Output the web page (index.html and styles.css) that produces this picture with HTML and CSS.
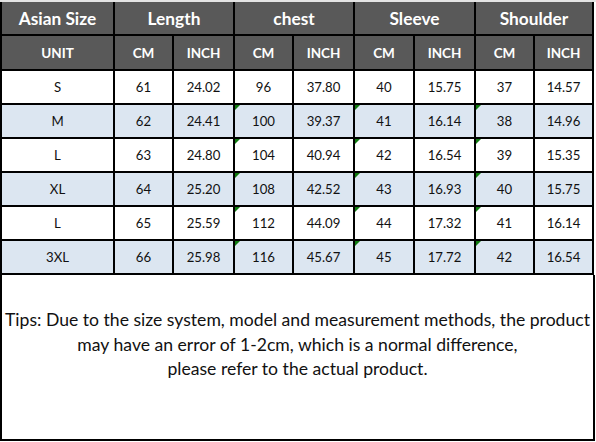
FILE: index.html
```html
<!DOCTYPE html>
<html>
<head>
<meta charset="utf-8">
<link rel="stylesheet" href="styles.css">
</head>
<body>
<div class="strip"></div>
<div class="chart">
  <div class="hd">Asian Size</div>
  <div class="hd span2">Length</div>
  <div class="hd span2">chest</div>
  <div class="hd span2">Sleeve</div>
  <div class="hd span2">Shoulder</div>

  <div class="sub">UNIT</div>
  <div class="sub">CM</div><div class="sub">INCH</div>
  <div class="sub">CM</div><div class="sub">INCH</div>
  <div class="sub">CM</div><div class="sub">INCH</div>
  <div class="sub">CM</div><div class="sub">INCH</div>

  <div class="c">S</div><div class="c">61</div><div class="c">24.02</div><div class="c">96</div><div class="c">37.80</div><div class="c">40</div><div class="c">15.75</div><div class="c">37</div><div class="c">14.57</div>

  <div class="c b">M</div><div class="c b">62</div><div class="c b">24.41</div><div class="c b mark">100</div><div class="c b">39.37</div><div class="c b mark">41</div><div class="c b">16.14</div><div class="c b mark">38</div><div class="c b">14.96</div>

  <div class="c">L</div><div class="c">63</div><div class="c">24.80</div><div class="c mark">104</div><div class="c">40.94</div><div class="c mark">42</div><div class="c">16.54</div><div class="c mark">39</div><div class="c">15.35</div>

  <div class="c b">XL</div><div class="c b">64</div><div class="c b">25.20</div><div class="c b mark">108</div><div class="c b">42.52</div><div class="c b mark">43</div><div class="c b">16.93</div><div class="c b mark">40</div><div class="c b">15.75</div>

  <div class="c">L</div><div class="c">65</div><div class="c">25.59</div><div class="c mark">112</div><div class="c">44.09</div><div class="c mark">44</div><div class="c">17.32</div><div class="c mark">41</div><div class="c">16.14</div>

  <div class="c b">3XL</div><div class="c b">66</div><div class="c b">25.98</div><div class="c b mark">116</div><div class="c b">45.67</div><div class="c b mark">45</div><div class="c b">17.72</div><div class="c b mark">42</div><div class="c b">16.54</div>
</div>
<div class="tips">
  <p>Tips: Due to the size system, model and measurement methods, the product<br>may have an error of 1-2cm, which is a normal difference,<br>please refer to the actual product.</p>
</div>
</body>
</html>
```

FILE: styles.css
```css
html, body {
  margin: 0;
  padding: 0;
  background: #ffffff;
}
body {
  width: 596px;
  height: 442px;
  overflow: hidden;
  font-family: Lato, "Open Sans", sans-serif;
}
.strip {
  height: 2px;
  width: 596px;
  background: #e4e4e4;
}
.chart {
  display: grid;
  grid-template-columns: 111px 57px 59px 57px 59px 58px 59px 57px 57px;
  grid-template-rows: 32px 33px repeat(6, 32px);
  gap: 2px;
  padding: 0 2px 2px 2px;
  background: #000;
  width: max-content;
}
.hd, .sub, .c {
  display: flex;
  align-items: center;
  justify-content: center;
}
.hd {
  background: #595959;
  color: #ffffff;
  font-weight: 700;
  font-size: 17.3px;
}
.span2 {
  grid-column: span 2;
}
.sub {
  background: #595959;
  color: #ffffff;
  font-weight: 700;
  font-size: 13.5px;
}
.c {
  background: #ffffff;
  color: #111;
  font-size: 13.2px;
}
.c.b {
  background: #dce6f1;
}
.mark {
  position: relative;
}
.mark::before {
  content: "";
  position: absolute;
  left: 0;
  top: 0;
  border-top: 5px solid #0f7b0f;
  border-right: 5px solid transparent;
}
.tips {
  box-sizing: border-box;
  width: 595px;
  height: 166px;
  border: 2px solid #000;
  border-top: none;
  display: flex;
  justify-content: center;
  padding-top: 33px;
}
.tips p {
  margin: 0;
  text-align: center;
  font-size: 17.6px;
  line-height: 24.5px;
  color: #111;
  white-space: nowrap;
}
```
